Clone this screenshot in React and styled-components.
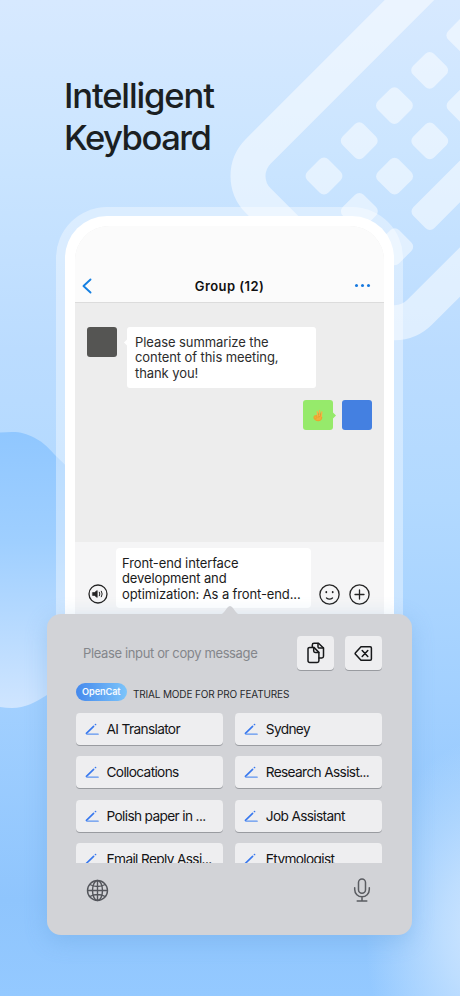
import React from "react";
import styled, { createGlobalStyle } from "styled-components";

const GlobalStyle = createGlobalStyle`
  * { box-sizing: border-box; }
  body {
    margin: 0;
    font-family: Inter, "Liberation Sans", sans-serif;
    color: #16181a;
  }
`;

const Page = styled.main`
  position: relative;
  width: 460px;
  height: 996px;
  overflow: hidden;
  background:
    radial-gradient(ellipse 120px 190px at 485px 930px, #cfe6ff 0, rgba(200, 227, 255, 0.8) 35%, rgba(170, 212, 255, 0) 100%),
    linear-gradient(180deg, #d7e9ff 0, #cbe5ff 150px, #bbdcff 350px, #b2d9ff 500px, #a2d0ff 700px, #8fc5fd 900px, #94c9ff 996px);
`;

const Backdrop = styled.svg`
  position: absolute;
  inset: 0;
`;

const Content = styled.div`
  position: relative;
  display: flex;
  flex-direction: column;
`;

const Title = styled.h1`
  margin: 74px 0 0 64px;
  font-size: 34.6px;
  line-height: 42px;
  font-weight: 500;
  color: #1b1f22;
`;

const TitleLine = styled.span`
  display: block;
  letter-spacing: ${(p) => p.$spacing};
`;

const Phone = styled.section`
  width: 347px;
  height: 430px;
  margin: 49px 0 0 56px;
  padding: 9px 9px 0;
  border-radius: 51px 51px 0 0;
  background: rgba(255, 255, 255, 0.38);
`;

const Bezel = styled.div`
  height: 100%;
  padding: 10px 10px 0;
  border-radius: 42px 42px 0 0;
  background: #fff;
`;

const Screen = styled.div`
  height: 100%;
  display: flex;
  flex-direction: column;
  overflow: hidden;
  border-radius: 34px 34px 0 0;
  background: #ededed;
`;

const NavBar = styled.header`
  display: grid;
  grid-template-columns: 40px 1fr 40px;
  align-items: center;
  height: 77px;
  padding: 43px 7px 0;
  border-bottom: 1px solid #dcdcdc;
  background: #fbfbfb;
`;

const NavTitle = styled.h2`
  margin: 0;
  text-align: center;
  font-size: 13px;
  line-height: 18px;
  font-weight: 600;
  letter-spacing: 0.42px;
  color: #111;
`;

const NavMore = styled.div`
  display: flex;
  gap: 3px;
  justify-content: flex-end;
  padding-right: 7px;
`;

const Dot = styled.i`
  width: 3px;
  height: 3px;
  border-radius: 50%;
  background: #1679df;
`;

const Conversation = styled.div`
  height: 239px;
  padding: 24px 12px 0;
  display: flex;
  flex-direction: column;
  gap: 12px;
`;

const Message = styled.div`
  display: flex;
  align-items: flex-start;
  gap: ${(p) => (p.$mine ? "9px" : "10px")};
  justify-content: ${(p) => (p.$mine ? "flex-end" : "flex-start")};
`;

const Avatar = styled.div`
  width: 30px;
  height: 30px;
  border-radius: 3px;
  background: ${(p) => p.$color};
`;

const Bubble = styled.div`
  position: relative;
  width: 189px;
  height: 61px;
  padding: 7.5px 8px;
  border-radius: 3px;
  background: #fff;
  font-size: 13px;
  line-height: 15.7px;
  letter-spacing: -0.08px;
  color: #2c2c2c;
  &::before {
    content: "";
    position: absolute;
    left: -2px;
    top: 13px;
    width: 5px;
    height: 5px;
    background: inherit;
    transform: rotate(45deg);
  }
`;

const EmojiBubble = styled.div`
  position: relative;
  width: 30px;
  height: 30px;
  display: grid;
  place-items: center;
  border-radius: 3px;
  background: #96ea6b;
  &::after {
    content: "";
    position: absolute;
    right: -2px;
    top: 13px;
    width: 5px;
    height: 5px;
    background: inherit;
    transform: rotate(45deg);
  }
`;

const Composer = styled.div`
  flex: 1;
  display: flex;
  align-items: flex-start;
  padding: 5px 12px 0 13px;
  background: #f5f5f6;
`;

const Draft = styled.div`
  width: 195px;
  height: 60px;
  margin: 1px 8px 0;
  padding: 7.5px 0 0 6px;
  border-radius: 4px;
  background: #fff;
  font-size: 13px;
  line-height: 15.8px;
  letter-spacing: -0.12px;
  white-space: nowrap;
  color: #1b1b1b;
`;

const RoundIcon = styled.svg`
  flex: none;
  margin: 37px ${(p) => p.$gap || "0"} 0 0;
`;

const Keyboard = styled.section`
  position: relative;
  width: 365px;
  height: 321px;
  margin: -23px 0 0 47px;
  padding: 22px 30px 0 28.5px;
  border-radius: 14px;
  background: #d2d3d7;
  box-shadow: 0 6px 22px rgba(95, 155, 215, 0.32);
`;

const Pointer = styled.svg`
  position: absolute;
  left: 171px;
  top: -9px;
`;

const InputRow = styled.div`
  display: flex;
  align-items: center;
  gap: 11px;
`;

const Placeholder = styled.span`
  flex: 1;
  padding-left: 7.5px;
  font-size: 13px;
  letter-spacing: -0.37px;
  color: #84868b;
`;

const Key = styled.button`
  display: flex;
  align-items: center;
  border: 0;
  padding: 0;
  border-radius: 4px;
  background: #eeeef0;
  box-shadow: 0 1px 0 #999ba0;
  color: #141416;
  font-family: inherit;
`;

const IconKey = styled(Key)`
  width: 37px;
  height: 34px;
  justify-content: center;
`;

const PlanRow = styled.div`
  display: flex;
  align-items: center;
  height: 18px;
  margin-top: 13px;
  gap: 6px;
`;

const Badge = styled.span`
  width: 51.5px;
  height: 18px;
  border-radius: 9px;
  background: linear-gradient(90deg, #4589ed, #7cc4fa);
  text-align: center;
  font-size: 9.2px;
  line-height: 17.5px;
  font-weight: 600;
  letter-spacing: -0.1px;
  color: #f5faff;
`;

const PlanText = styled.span`
  padding-top: 3px;
  font-size: 10px;
  line-height: 14px;
  letter-spacing: -0.16px;
  color: #28292c;
  white-space: nowrap;
`;

const Prompts = styled.div`
  display: grid;
  grid-template-columns: 1fr 1fr;
  gap: 11.3px 12px;
  height: 150px;
  margin-top: 12px;
  overflow: hidden;
  align-content: start;
`;

const PromptKey = styled(Key)`
  height: 32px;
  padding-left: 9px;
  gap: 8px;
  font-size: 13.7px;
  letter-spacing: -0.65px;
  white-space: nowrap;
`;

const BottomRow = styled.div`
  display: flex;
  justify-content: space-between;
  align-items: center;
  height: 24px;
  margin-top: 15px;
  padding: 0 10px;
`;

const KEY_PADS = [
  [64, 64], [113.8, 64], [163.6, 64], [213.4, 64], [263.2, 64],
  [64, 114], [113.8, 114], [163.6, 114], [213.4, 114], [263.2, 114],
  [64, 164],
];

const PROMPTS = [
  "AI Translator",
  "Sydney",
  "Collocations",
  "Research Assist...",
  "Polish paper in ...",
  "Job Assistant",
  "Email Reply Assi...",
  "Etymologist",
];

function Artwork() {
  return (
    <Backdrop width="460" height="996" viewBox="0 0 460 996" fill="none">
      <defs>
        <linearGradient id="blob" x1="0" y1="432" x2="0" y2="708" gradientUnits="userSpaceOnUse">
          <stop offset="0" stopColor="#90c7ff" />
          <stop offset="0.4" stopColor="#9fcfff" />
          <stop offset="1" stopColor="#cfe5ff" />
        </linearGradient>
      </defs>
      <g transform="translate(233.5 176) rotate(-45)">
        <rect width="520" height="228" rx="35" stroke="#fff" strokeOpacity="0.5" strokeWidth="35" />
        <g fill="#fff" fillOpacity="0.5">
          {KEY_PADS.map(([u, v]) => (
            <rect key={`${u}-${v}`} x={u - 14.8} y={v - 14.8} width="29.6" height="29.6" rx="6" />
          ))}
          <rect x="99" y="149.2" width="200" height="29.6" rx="6" />
        </g>
      </g>
      <path
        d="M-10 434C-2 432.5 5 432 12 432C21 432 27 434 34 437.5C45 443 50 450 56 456C68 468 90 485 90 520V640C90 660 65 684 47 695C36 702 25 708 12 708C5 708 -2 707 -10 705Z"
        fill="url(#blob)"
      />
    </Backdrop>
  );
}

const PenIcon = () => (
  <svg width="14" height="14" viewBox="0 0 14 14" fill="none" strokeLinecap="round">
    <path d="M1.4 11.4 8.6 4.4" stroke="#3878ee" strokeWidth="1.6" />
    <path d="M10.5 2.5h.01" stroke="#3878ee" strokeWidth="1.7" />
    <path d="M2 12.2H13.2" stroke="#5d94ef" strokeWidth="1.2" />
  </svg>
);

const OkHand = () => (
  <svg width="12" height="13" viewBox="0 0 12 13" fill="none" strokeLinecap="round" strokeLinejoin="round">
    <path d="M3.8 7.2C5.6 5.6 8.2 5.5 9.4 7.2C10.5 9.2 8.8 11.8 6.4 11.7C4 11.7 1.8 10 2 8C2.2 6.2 4.8 6.5 4.8 8.1C4.8 9.4 3 9.8 2.3 8.9" fill="#f1ad3b" stroke="#eba52f" strokeWidth="1.2" />
    <path d="M5.8 6.6 5.3 2.8M7.6 6.5 7.5 1.4M9.3 7.2 9.8 3" stroke="#f3b444" strokeWidth="1.4" />
    <path d="M6.1 8.1 8 7.5M6.7 6.2 6.5 4M8.5 6.3 8.6 4" stroke="#d9862b" strokeWidth="0.5" />
  </svg>
);

export default function App() {
  return (
    <>
      <GlobalStyle />
      <Page>
        <Artwork />
        <Content>
          <Title>
            <TitleLine $spacing="-1.15px">Intelligent</TitleLine>
            <TitleLine $spacing="-1.5px">Keyboard</TitleLine>
          </Title>

          <Phone>
            <Bezel>
              <Screen>
                <NavBar>
                  <svg width="10" height="16" viewBox="0 0 10 16" fill="none" stroke="#1680e2" strokeWidth="1.9" strokeLinecap="round" strokeLinejoin="round">
                    <path d="M8.5 1.5 1.5 8l7 6.5" />
                  </svg>
                  <NavTitle>Group (12)</NavTitle>
                  <NavMore><Dot /><Dot /><Dot /></NavMore>
                </NavBar>

                <Conversation>
                  <Message>
                    <Avatar $color="#555553" />
                    <Bubble>Please summarize the<br />content of this meeting,<br />thank you!</Bubble>
                  </Message>
                  <Message $mine>
                    <EmojiBubble><OkHand /></EmojiBubble>
                    <Avatar $color="#4480e1" />
                  </Message>
                </Conversation>

                <Composer>
                  <RoundIcon width="20" height="20" viewBox="0 0 20 20" fill="none" stroke="#242424" strokeWidth="1.3" strokeLinecap="round">
                    <circle cx="10" cy="10" r="9" />
                    <path d="M4.8 8.6h1.6l2.8-2v6.8l-2.8-2h-1.6z" fill="#242424" strokeWidth="0.7" />
                    <path d="M11.4 8.2q1 1.8 0 3.6M13.4 7.2q1.7 2.8 0 5.6" strokeWidth="1" />
                  </RoundIcon>
                  <Draft>Front-end interface<br />development and<br />optimization: As a front-end...</Draft>
                  <RoundIcon $gap="9px" width="21" height="21" viewBox="0 0 21 21" fill="none" stroke="#242424" strokeWidth="1.3" strokeLinecap="round">
                    <circle cx="10.5" cy="10.5" r="9.6" />
                    <path d="M7.5 14q3 2.4 6 0" />
                    <path d="M7.3 7.9v.4M13.7 7.9v.4" strokeWidth="1.8" />
                  </RoundIcon>
                  <RoundIcon width="21" height="21" viewBox="0 0 21 21" fill="none" stroke="#242424" strokeWidth="1.3" strokeLinecap="round">
                    <circle cx="10.5" cy="10.5" r="9.6" />
                    <path d="M10.5 6v9M6 10.5h9" />
                  </RoundIcon>
                </Composer>
              </Screen>
            </Bezel>
          </Phone>

          <Keyboard>
            <Pointer width="24" height="10" viewBox="0 0 24 10">
              <path d="M0 10C5 10 6 7 9.5 2.6C11 .6 13 .6 14.5 2.6C18 7 19 10 24 10Z" fill="#d2d3d7" />
            </Pointer>
            <InputRow>
              <Placeholder>Please input or copy message</Placeholder>
              <IconKey aria-label="Copy">
                <svg width="20" height="22" viewBox="0 0 20 22" fill="none" stroke="#17181a" strokeWidth="1.5" strokeLinejoin="round" strokeLinecap="round">
                  <path d="M3.7 5.4h4.2l5 5v8.4a1.7 1.7 0 0 1-1.7 1.7H3.7A1.7 1.7 0 0 1 2 18.8V7.1a1.7 1.7 0 0 1 1.7-1.7Z" />
                  <path d="M7.7 5.5v3.6a1.4 1.4 0 0 0 1.4 1.4h3.7" />
                  <path d="M6.3 5.3V3a1.7 1.7 0 0 1 1.7-1.7h4.5L17.5 6v8.3a1.7 1.7 0 0 1-1.7 1.7H13" />
                  <path d="M12 1.5v3.2a1.4 1.4 0 0 0 1.4 1.4h4" />
                </svg>
              </IconKey>
              <IconKey aria-label="Delete">
                <svg width="19" height="17" viewBox="0 0 19 17" fill="none" stroke="#17181a" strokeWidth="1.5" strokeLinejoin="round" strokeLinecap="round">
                  <path d="M7 1.7h9.2a1.2 1.2 0 0 1 1.2 1.2v11.2a1.2 1.2 0 0 1-1.2 1.2H7L1.5 9.3a1.2 1.2 0 0 1 0-1.6Z" />
                  <path d="m8.2 5.5 5.6 6M13.8 5.5l-5.6 6" />
                </svg>
              </IconKey>
            </InputRow>

            <PlanRow>
              <Badge>OpenCat</Badge>
              <PlanText>TRIAL MODE FOR PRO FEATURES</PlanText>
            </PlanRow>

            <Prompts>
              {PROMPTS.map((label) => (
                <PromptKey key={label}><PenIcon />{label}</PromptKey>
              ))}
            </Prompts>

            <BottomRow>
              <svg width="23" height="23" viewBox="0 0 23 23" fill="none" stroke="#54565c" strokeWidth="1.4">
                <circle cx="11.5" cy="11.5" r="10" />
                <ellipse cx="11.5" cy="11.5" rx="5" ry="10" />
                <path d="M11.5 1.5v20M1.5 11.5h20M3.8 5.5q7.7 4 15.4 0M3.8 17.5q7.7-4 15.4 0" />
              </svg>
              <svg width="20" height="24" viewBox="0 0 20 24" fill="none" stroke="#5a5c61" strokeWidth="1.5" strokeLinecap="round">
                <rect x="6.5" y="1" width="7" height="14.2" rx="3.5" />
                <path d="M2.7 9.7v1.8a7.3 7.3 0 0 0 14.6 0V9.7M10 18.8v4M5.2 22.9h9.6" />
              </svg>
            </BottomRow>
          </Keyboard>
        </Content>
      </Page>
    </>
  );
}
